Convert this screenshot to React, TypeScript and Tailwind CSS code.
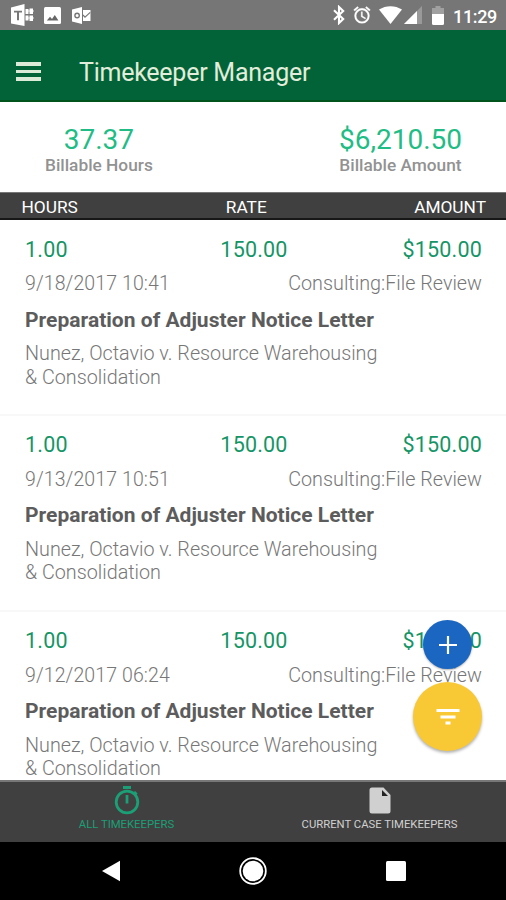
import React from "react";

type Entry = { date: string };

const entries: Entry[] = [
  { date: "9/18/2017 10:41" },
  { date: "9/13/2017 10:51" },
  { date: "9/12/2017 06:24" },
];

function StatusBar() {
  return (
    <div className="flex h-[30px] shrink-0 items-center bg-[#767676] pl-[11px] pr-[9px] text-white">
      <svg width="24" height="22" viewBox="0 0 24 22" fill="#fff">
        <path d="M0 3.5 13.5 0v22L0 19.5z" />
        <path d="M3 6.8h8v1.8H8v7.6H6V8.6H3z" fill="#777" />
        <path d="M14.5 5h3v5h-3zM14.5 11.5h3v5h-3zM18.5 4.5h3.5v5.5h-3.5zM18.5 11.5h3.5v5.5h-3.5z" />
        <path d="M17 6.5h6v1h-6zM17 13.5h6v1h-6z" opacity=".8" />
      </svg>
      <svg className="ml-[9px]" width="17" height="17" viewBox="0 0 17 17">
        <rect width="17" height="17" rx="1.5" fill="#fff" />
        <path d="M2.8 13.5 6 9.7l2 2.2 2.8-3.8 3.6 5.4z" fill="#666" />
      </svg>
      <svg className="ml-[11px]" width="19" height="17" viewBox="0 0 19 17" fill="#fff">
        <path d="M0 2.4 10 0v17L0 14.6z" />
        <path d="M11 3h7.5v11H11z" />
        <circle cx="5.1" cy="8.5" r="2.2" fill="none" stroke="#777" strokeWidth="1.4" />
        <path d="m11 8 2 2.2 5.2-4.8" fill="none" stroke="#777" strokeWidth="1.2" />
      </svg>
      <div className="grow" />
      <svg width="14" height="20" viewBox="0 0 14 20" fill="none" stroke="#fff" strokeWidth="2.1">
        <path d="m2 5.3 9.2 8.6L7 18V2l4.2 4.1L2 14.7" />
      </svg>
      <svg className="ml-[6px]" width="20" height="20" viewBox="0 0 24 24" fill="#fff" stroke="#fff" strokeWidth=".4">
        <path d="m22 5.72-4.6-3.86-1.29 1.53 4.6 3.86zM7.88 3.39 6.6 1.86 2 5.71l1.29 1.53zM12.5 8H11v6l4.75 2.85.75-1.23-4-2.37zM12 4a9 9 0 1 0 0 18 9 9 0 0 0 0-18m0 16a7 7 0 1 1 0-14 7 7 0 0 1 0 14" />
      </svg>
      <svg className="ml-[7px]" width="23" height="18" viewBox="0 0 23 18" fill="#fff">
        <path d="M0 3.5C7-1 16-1 23 3.5L11.5 18z" />
      </svg>
      <svg className="ml-[2px]" width="18" height="18" viewBox="0 0 18 18">
        <path d="M18 0v18H0z" fill="#999" />
        <path d="M13 5v13H0z" fill="#fff" />
      </svg>
      <svg className="ml-[10px]" width="12" height="19" viewBox="0 0 12 19">
        <path d="M3.5 0h5v2H12v6H0V2h3.5z" fill="#a0a0a0" />
        <path d="M0 8h12v9.5q0 1.5-1.5 1.5h-9Q0 19 0 17.500z" fill="#fff" />
      </svg>
      <span className="ml-[9px] w-[44px] pt-[3px] whitespace-nowrap text-[18px] leading-none font-medium tracking-[-0.35px]">11:29</span>
    </div>
  );
}

function Row({ date }: Entry) {
  return (
    <div className="h-[195.7px] shrink-0 border-b-2 border-[#f8f8f8] px-[25px] pt-[16px] whitespace-nowrap">
      <div className="-mr-px grid grid-cols-3 text-[21.5px] leading-[26px] tracking-[0.2px] text-[#159566]">
        <span>1.00</span>
        <span className="pl-px text-center">150.00</span>
        <span className="text-right">$150.00</span>
      </div>
      <div className="-mr-px mt-[9.5px] flex justify-between text-[19.5px] leading-[24px] font-light text-[#777]">
        <span className="tracking-[0.1px]">{date}</span>
        <span className="text-[19.8px]">Consulting:File Review</span>
      </div>
      <div className="mt-[11.5px] text-[21px] leading-[25px] font-bold tracking-[0.02px] text-[#5c5c5c]">
        Preparation of Adjuster Notice Letter
      </div>
      <div className="mt-[9.7px] text-[19.75px] leading-[23.3px] font-light text-[#777]">
        Nunez, Octavio v. Resource Warehousing
        <br />
        &amp; Consolidation
      </div>
    </div>
  );
}

export default function App() {
  return (
    <div className="relative flex h-[900px] w-[506px] flex-col overflow-hidden bg-white font-['Roboto',sans-serif]">
      <StatusBar />
      <header className="flex h-[72px] shrink-0 items-center border-b-2 border-[#00541c] bg-[#026338] pt-[13px] pl-[16px]">
        <div className="flex w-[25px] flex-col gap-[4px]">
          <div className="h-[4px] bg-[#dcebd8]" />
          <div className="h-[3px] bg-[#dcebd8]" />
          <div className="h-[4px] bg-[#dcebd8]" />
        </div>
        <h1 className="ml-[38px] pt-[2px] text-[25px] leading-[30px] tracking-[-0.25px] whitespace-nowrap text-[#e2eedb]">Timekeeper Manager</h1>
      </header>
      <section className="flex h-[90px] shrink-0 justify-between pt-[22px] pr-[44px] pl-[45px] text-center whitespace-nowrap">
        <div>
          <div className="text-[28px] leading-[31px] text-[#1fbd85]">37.37</div>
          <div className="text-[17.3px] leading-[21px] font-medium text-[#929292]">Billable Hours</div>
        </div>
        <div>
          <div className="text-[28px] leading-[31px] text-[#1fbd85]">$6,210.50</div>
          <div className="text-[17.3px] leading-[21px] font-medium text-[#929292]">Billable Amount</div>
        </div>
      </section>
      <div className="grid h-[28px] shrink-0 grid-cols-3 items-center border-t border-b-2 border-t-[#777] border-b-[#171717] bg-[#404040] pt-[4px] pr-[20px] pl-[21.500px] text-[17.3px] leading-none text-white">
        <span>HOURS</span>
        <span className="pr-[15px] text-center">RATE</span>
        <span className="text-right">AMOUNT</span>
      </div>
      <main className="flex min-h-0 grow flex-col overflow-hidden pt-[0.7px]">
        {entries.map((entry) => (
          <Row key={entry.date} date={entry.date} />
        ))}
      </main>
      <nav className="grid h-[62px] shrink-0 grid-cols-2 border-t-2 border-[#777] bg-[#404040] text-center text-[11px] leading-[14px] whitespace-nowrap">
        <div className="flex flex-col items-center pt-[3px] text-[#1b9f76]">
          <svg width="26" height="30" viewBox="0 0 26 30" fill="none" stroke="currentColor">
            <circle cx="13" cy="17" r="10.800" strokeWidth="2.800" />
            <path d="M9 2.500h8" strokeWidth="3" />
            <path d="M13 10v8.500" strokeWidth="2.800" />
            <path d="m20 7 2.600 2.500" strokeWidth="3" />
          </svg>
          <span className="mt-[3px] text-[11.3px]">ALL TIMEKEEPERS</span>
        </div>
        <div className="flex flex-col items-center pt-[3px] text-[#d0d0d0]">
          <svg width="22" height="30" viewBox="0 0 22 30">
            <path d="M3 2.500h11.500L21.500 10v16q0 2.500-2.500 2.500H3Q.5 28.500.5 26V5Q.5 2.500 3 2.500z" fill="currentColor" />
            <path d="M13 5v6h6z" fill="#222" />
          </svg>
          <span className="mt-[3px] text-[11.3px]">CURRENT CASE TIMEKEEPERS</span>
        </div>
      </nav>
      <div className="flex h-[58px] shrink-0 items-center bg-black pl-[102px]">
        <svg width="18" height="22" viewBox="0 0 18 22">
          <path d="M0 11 18 .8v20.400z" fill="#fff" />
        </svg>
        <svg className="ml-[119px]" width="28" height="28" viewBox="0 0 28 28">
          <circle cx="14" cy="14" r="12.800" fill="none" stroke="#fff" strokeWidth="1.800" />
          <circle cx="14" cy="14" r="10.300" fill="#fff" />
        </svg>
        <div className="ml-[119px] size-[20px] rounded-[1.500px] bg-white" />
      </div>
      <button className="absolute top-[620px] left-[423px] flex size-[49px] items-center justify-center rounded-full bg-[#1b66c0] shadow-[0_1px_2px_rgba(0,0,0,0.3)]">
        <svg width="18" height="18" viewBox="0 0 18 18" stroke="#fff" strokeWidth="2.200">
          <path d="M9 0v18M0 9h18" />
        </svg>
      </button>
      <button className="absolute top-[682px] left-[413px] flex size-[69px] items-center justify-center rounded-full bg-[#f8c934] shadow-[0_2px_3px_rgba(0,0,0,0.3)]">
        <svg width="24" height="16" viewBox="0 0 24 16" fill="#fff">
          <path d="M.5 0h23v3H.5zM4.500 6.500h15v3h-15zM9.500 12.500h5v3h-5z" />
        </svg>
      </button>
    </div>
  );
}
